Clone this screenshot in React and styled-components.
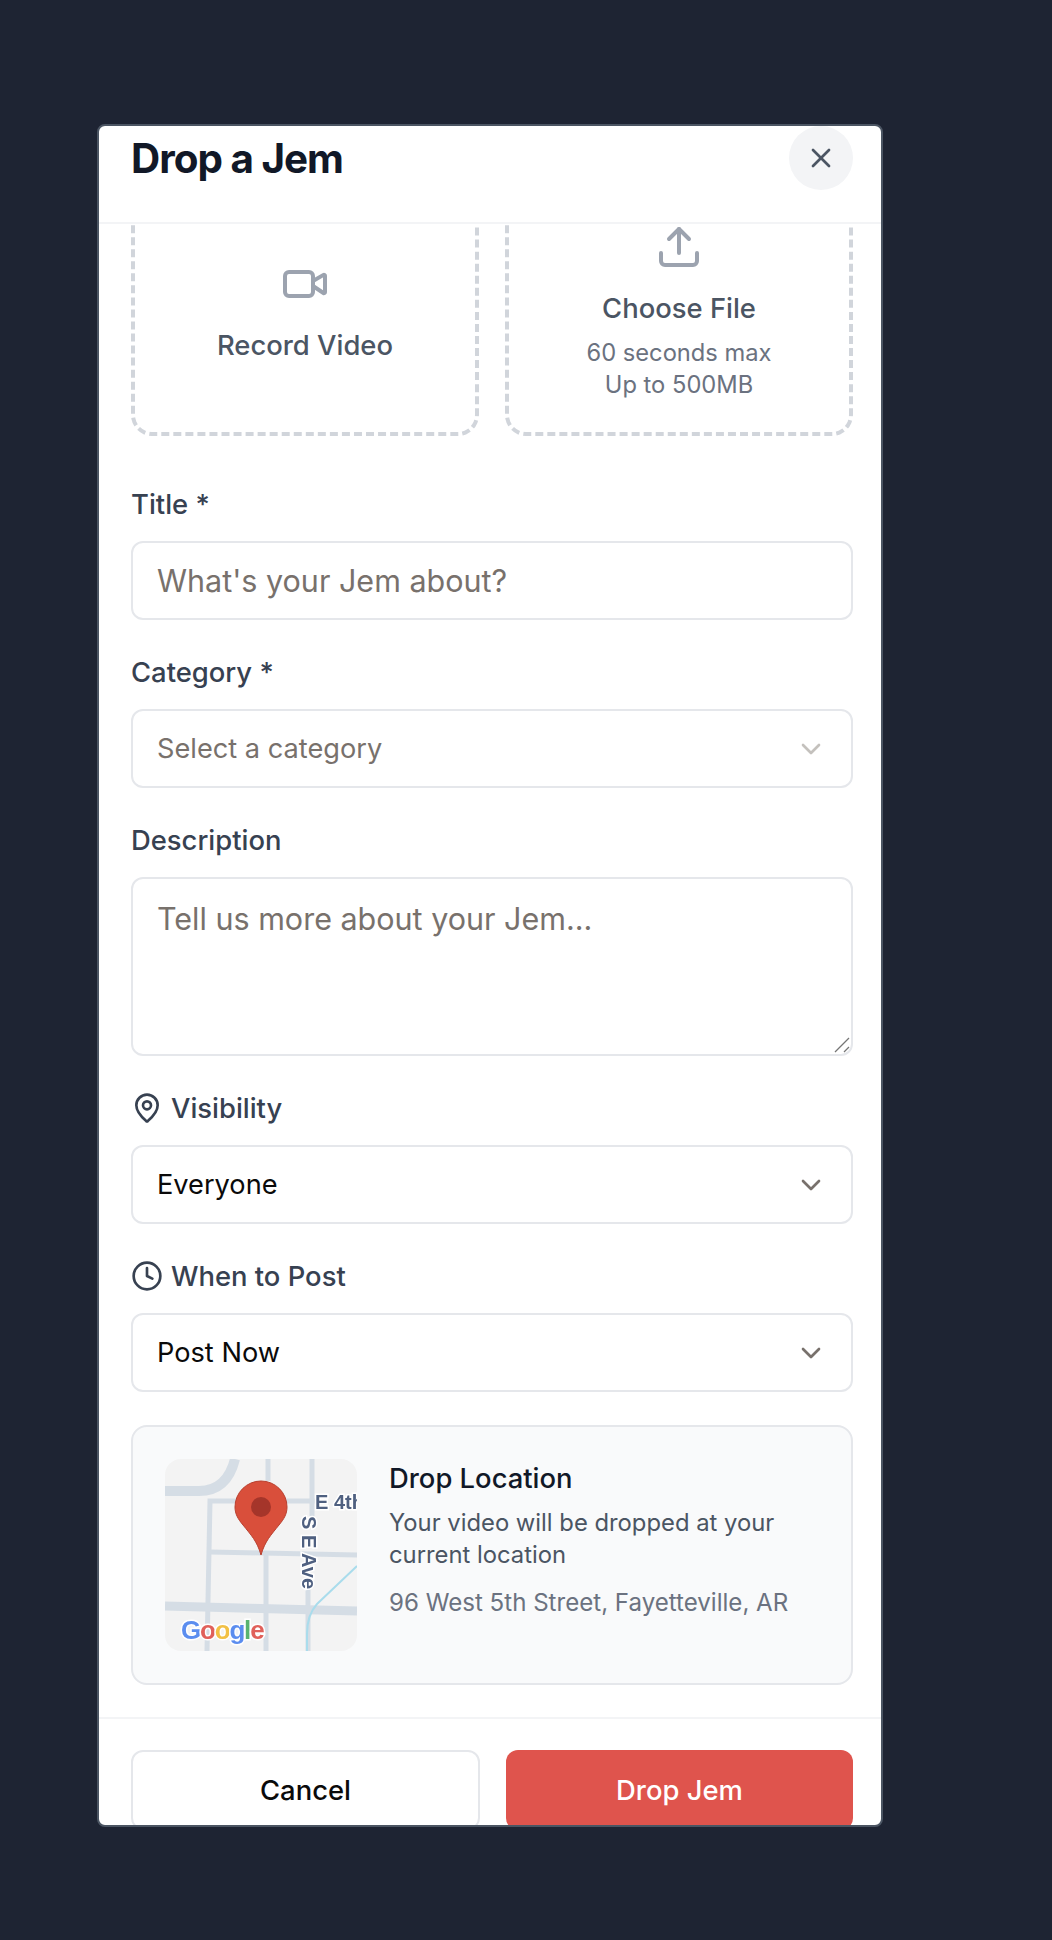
import React from 'react';
import styled, { createGlobalStyle } from 'styled-components';
import { X, Video, Upload, MapPin, Clock, ChevronDown } from 'lucide-react';

const Global = createGlobalStyle`
  html, body {
    margin: 0;
    background: #1e2433;
    font-family: Inter, "Liberation Sans", sans-serif;
  }
  * { box-sizing: border-box; }
`;

const Page = styled.div`
  height: 1940px;
  padding: 124px 0 0 97px;
  overflow: hidden;
`;

const Modal = styled.div`
  width: 786px;
  height: 1703px;
  background: #fff;
  border: 2px solid #4b5563;
  border-radius: 8px;
  overflow: hidden;
  display: flex;
  flex-direction: column;
`;

const Header = styled.header`
  height: 98px;
  flex: none;
  display: flex;
  justify-content: space-between;
  align-items: flex-start;
  padding: 0 28px 0 32px;
  border-bottom: 2px solid #f3f4f6;
`;

const Title = styled.h2`
  margin: 0;
  font-size: 40.4px;
  line-height: 66px;
  font-weight: 650;
  letter-spacing: -1px;
  color: #111827;
`;

const CloseButton = styled.button`
  width: 64px;
  height: 64px;
  border: none;
  border-radius: 50%;
  background: #f3f4f6;
  color: #4b5563;
  display: flex;
  align-items: center;
  justify-content: center;
  padding: 0;
`;

const Body = styled.div`
  flex: none;
  height: 1493px;
  overflow: hidden;
  padding: 0 28px 0 32px;
  display: flex;
  flex-direction: column;
`;

const UploadRow = styled.div`
  display: grid;
  grid-template-columns: 348px 348px;
  justify-content: space-between;
  margin-top: -31px;
  margin-bottom: 49px;
`;

const UploadCard = styled.div`
  height: 243px;
  border: 4px dashed #d1d5db;
  border-radius: 21px;
  padding-bottom: 6px;
  display: flex;
  flex-direction: column;
  align-items: center;
  justify-content: center;
  color: #9ca3af;
`;

const CardTitle = styled.div`
  font-size: 27.4px;
  line-height: 36px;
  font-weight: 470;
  color: #4b5563;
  margin-top: 19px;
`;

const CardHint = styled.div`
  font-size: 23.7px;
  line-height: 32px;
  color: #6b7280;
  text-align: center;
  margin-top: 11px;
`;

const Field = styled.div`
  margin-bottom: 33px;
`;

const Label = styled.label`
  display: flex;
  align-items: center;
  gap: 8px;
  height: 38px;
  margin-bottom: 18px;
  font-size: 27.4px;
  font-weight: 470;
  color: #374151;
  svg { flex: none; }
`;

const Control = styled.div`
  height: ${p => p.$height || 79}px;
  border: 2px solid #e5e7eb;
  border-radius: 12px;
  background: #fff;
  display: flex;
  align-items: ${p => (p.$multi ? 'flex-start' : 'center')};
  justify-content: space-between;
  padding: ${p => (p.$multi ? '22px 24px' : '0 24px')};
  font-size: ${p => p.$size || 27.2}px;
  line-height: 36px;
  color: ${p => (p.$filled ? '#0a0a0a' : '#78716c')};
  position: relative;
`;

const ChevronSlot = styled.span`
  display: flex;
  color: ${p => (p.$muted ? '#c4c1bd' : '#78716c')};
`;

const Resizer = styled.svg`
  position: absolute;
  right: 1px;
  bottom: 1px;
`;

const LocationCard = styled.div`
  height: 260px;
  flex: none;
  background: #f9fafb;
  border: 2px solid #e5e7eb;
  border-radius: 16px;
  padding: 32px;
  display: flex;
  gap: 32px;
`;

const MapThumb = styled.svg`
  width: 192px;
  height: 192px;
  flex: none;
  border-radius: 16px;
  display: block;
`;

const LocationInfo = styled.div`
  display: flex;
  flex-direction: column;
  padding-top: 1px;
`;

const LocationTitle = styled.div`
  font-size: 27.4px;
  line-height: 36px;
  font-weight: 470;
  color: #111827;
`;

const LocationText = styled.div`
  font-size: 23.8px;
  line-height: 32px;
  color: #4b5563;
  margin-top: 11px;
`;

const LocationAddress = styled.div`
  font-size: 24.1px;
  line-height: 32px;
  color: #6b7280;
  margin-top: 16px;
`;

const Footer = styled.footer`
  flex: 1;
  border-top: 2px solid #f3f4f6;
  padding: 31px 28px 0 32px;
  display: grid;
  grid-template-columns: 349px 347px;
  justify-content: space-between;
  align-items: start;
`;

const Button = styled.button`
  height: 80px;
  border-radius: 12px;
  font-family: inherit;
  font-size: 27.4px;
  font-weight: 470;
  padding: 0;
  border: ${p => (p.$primary ? 'none' : '2px solid #e5e7eb')};
  background: ${p => (p.$primary ? '#df544d' : '#fff')};
  color: ${p => (p.$primary ? '#fff' : '#0a0a0a')};
`;

function MapImage() {
  const road = { stroke: '#d5dde5', fill: 'none' };
  const halo = { stroke: '#fff', strokeWidth: 3, paintOrder: 'stroke' };
  return (
    <MapThumb viewBox="0 0 192 192">
      <rect width="192" height="192" fill="#f3f3f3" />
      <g style={{ filter: 'blur(0.7px)' }}>
        <path d="M0 32 H34 Q62 32 70 0" {...road} strokeWidth="10" />
        <path d="M103 0 V22 M101 96 V192" {...road} strokeWidth="5" />
        <path d="M147 0 V60 M143 130 V192" {...road} strokeWidth="5" />
        <path d="M42 192 L45 42 H150" {...road} strokeWidth="5" />
        <path d="M45 93 L192 96" {...road} strokeWidth="5" />
        <path d="M0 147 L192 152" {...road} strokeWidth="9" />
        <path d="M192 107 L152 145 Q142 156 142 175 V192" stroke="#a9dcec" strokeWidth="2" fill="none" />
        <text x="150" y="50" fontFamily="Liberation Sans, sans-serif" fontSize="20" fontWeight="700" fill="#4f6080" {...halo}>E 4th</text>
        <text transform="translate(137 57) rotate(90)" fontFamily="Liberation Sans, sans-serif" fontSize="20" fontWeight="700" fill="#4f6080" {...halo}>S E Ave</text>
        <text x="16" y="180" fontFamily="Liberation Sans, sans-serif" fontSize="26" fontWeight="700" letterSpacing="-1.2" {...halo}>
          <tspan fill="#5b8def">G</tspan>
          <tspan fill="#e0605a">o</tspan>
          <tspan fill="#f2c044">o</tspan>
          <tspan fill="#5b8def">g</tspan>
          <tspan fill="#59b36f">l</tspan>
          <tspan fill="#e0605a">e</tspan>
        </text>
      </g>
      <path d="M96 96 C92 82 86 76 78 66 C73 60 70 55 70 48 A26 26 0 0 1 122 48 C122 55 119 60 114 66 C106 76 100 82 96 96 Z" fill="#d94f3b" stroke="#b8402f" strokeWidth="1" />
      <circle cx="96" cy="48" r="10" fill="#a5352a" />
    </MapThumb>
  );
}

export default function App() {
  return (
    <>
      <Global />
      <Page>
        <Modal>
          <Header>
            <Title>Drop a Jem</Title>
            <CloseButton><X size={32} strokeWidth={2} /></CloseButton>
          </Header>
          <Body>
            <UploadRow>
              <UploadCard>
                <Video size={48} strokeWidth={2} />
                <CardTitle>Record Video</CardTitle>
              </UploadCard>
              <UploadCard>
                <Upload size={48} strokeWidth={2} />
                <CardTitle>Choose File</CardTitle>
                <CardHint>60 seconds max<br />Up to 500MB</CardHint>
              </UploadCard>
            </UploadRow>
            <Field>
              <Label>Title *</Label>
              <Control $size={30.5}>What's your Jem about?</Control>
            </Field>
            <Field>
              <Label>Category *</Label>
              <Control>
                Select a category
                <ChevronSlot $muted><ChevronDown size={32} /></ChevronSlot>
              </Control>
            </Field>
            <Field>
              <Label>Description</Label>
              <Control $height={179} $multi $size={30.5}>
                Tell us more about your Jem...
                <Resizer width="16" height="16" viewBox="0 0 16 16">
                  <path d="M1 15 L15 1 M10 15 L15 10" stroke="#757575" strokeWidth="1.3" />
                </Resizer>
              </Control>
            </Field>
            <Field>
              <Label><MapPin size={32} />Visibility</Label>
              <Control $filled>
                Everyone
                <ChevronSlot><ChevronDown size={32} /></ChevronSlot>
              </Control>
            </Field>
            <Field>
              <Label><Clock size={32} />When to Post</Label>
              <Control $filled>
                Post Now
                <ChevronSlot><ChevronDown size={32} /></ChevronSlot>
              </Control>
            </Field>
            <LocationCard>
              <MapImage />
              <LocationInfo>
                <LocationTitle>Drop Location</LocationTitle>
                <LocationText>Your video will be dropped at your<br />current location</LocationText>
                <LocationAddress>96 West 5th Street, Fayetteville, AR</LocationAddress>
              </LocationInfo>
            </LocationCard>
          </Body>
          <Footer>
            <Button>Cancel</Button>
            <Button $primary>Drop Jem</Button>
          </Footer>
        </Modal>
      </Page>
    </>
  );
}
